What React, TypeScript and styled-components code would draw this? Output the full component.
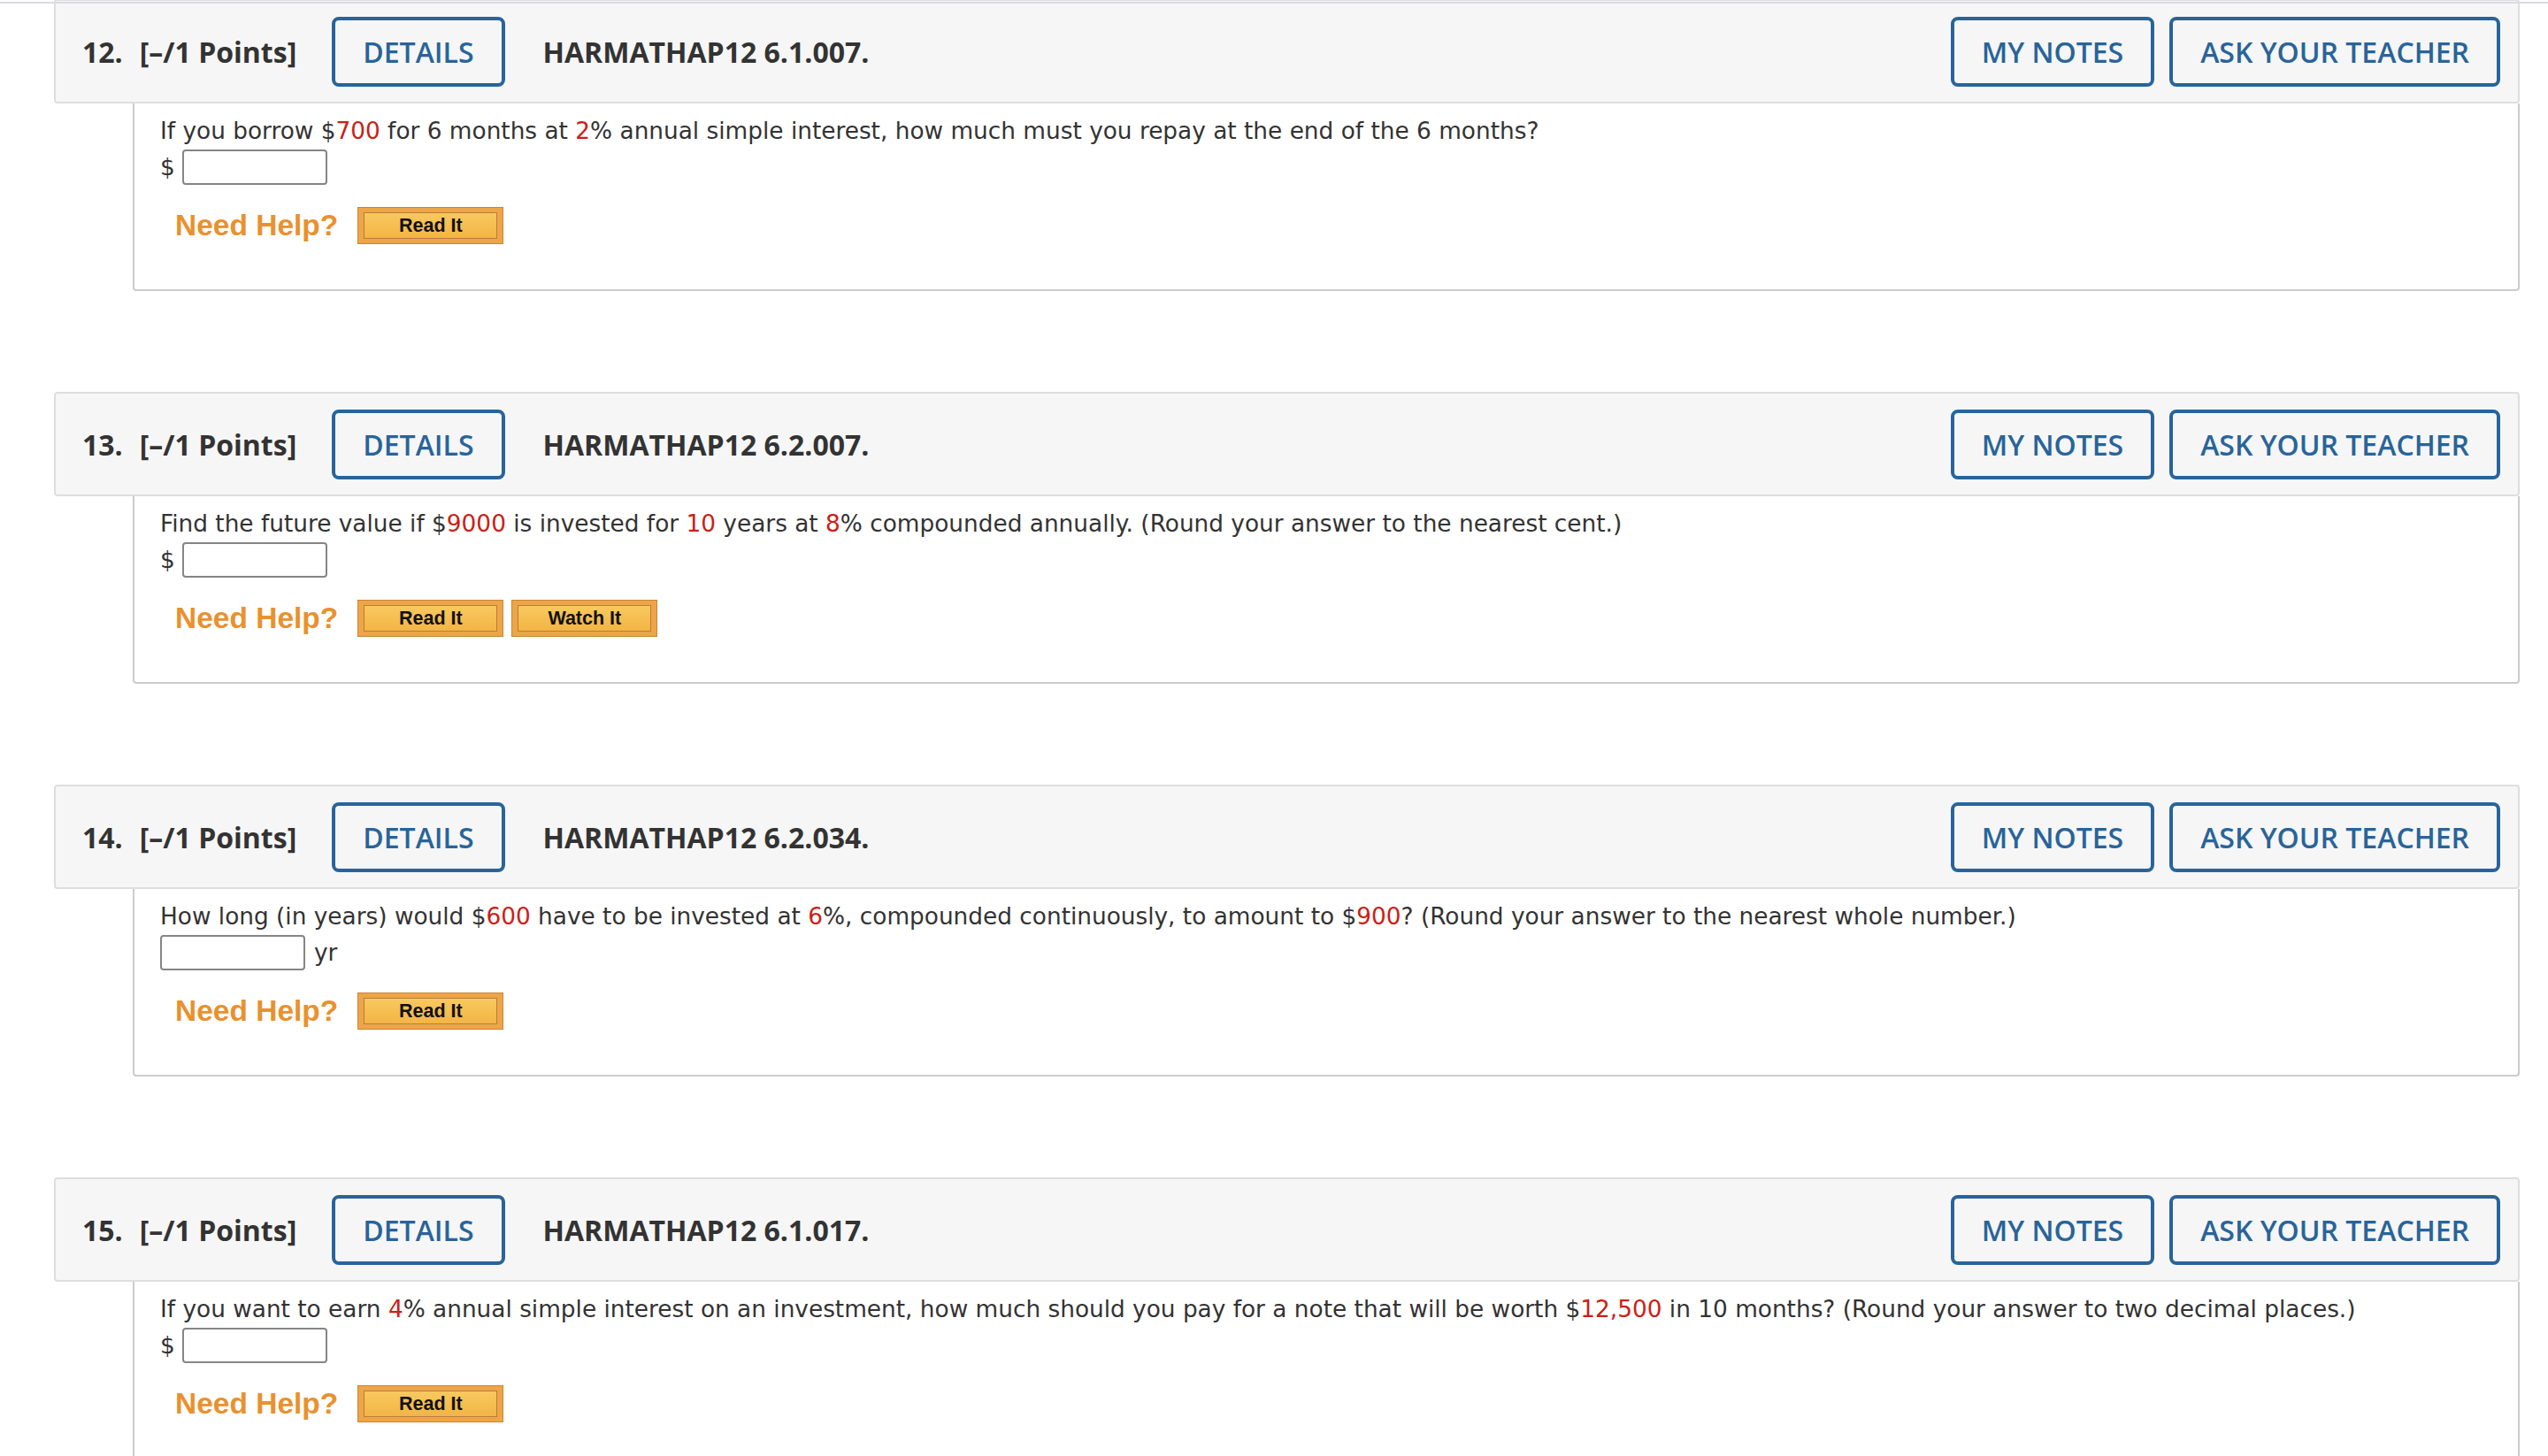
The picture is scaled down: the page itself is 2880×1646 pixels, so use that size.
import React from "react";
import styled, { createGlobalStyle } from "styled-components";

const GlobalStyle = createGlobalStyle`
  html, body {
    margin: 0;
    padding: 0;
    background: #ffffff;
  }
  body {
    font-family: "DejaVu Sans", Verdana, sans-serif;
    color: #333333;
  }
`;

type Part = string | { v: string };

type Question = {
  num: number;
  code: string;
  text: Part[];
  unit?: "before" | "after";
  help: string[];
};

const questions: Question[] = [
  {
    num: 12,
    code: "HARMATHAP12 6.1.007.",
    text: [
      "If you borrow $",
      { v: "700" },
      " for 6 months at ",
      { v: "2" },
      "% annual simple interest, how much must you repay at the end of the 6 months?",
    ],
    unit: "before",
    help: ["Read It"],
  },
  {
    num: 13,
    code: "HARMATHAP12 6.2.007.",
    text: [
      "Find the future value if $",
      { v: "9000" },
      " is invested for ",
      { v: "10" },
      " years at ",
      { v: "8" },
      "% compounded annually. (Round your answer to the nearest cent.)",
    ],
    unit: "before",
    help: ["Read It", "Watch It"],
  },
  {
    num: 14,
    code: "HARMATHAP12 6.2.034.",
    text: [
      "How long (in years) would $",
      { v: "600" },
      " have to be invested at ",
      { v: "6" },
      "%, compounded continuously, to amount to $",
      { v: "900" },
      "? (Round your answer to the nearest whole number.)",
    ],
    unit: "after",
    help: ["Read It"],
  },
  {
    num: 15,
    code: "HARMATHAP12 6.1.017.",
    text: [
      "If you want to earn ",
      { v: "4" },
      "% annual simple interest on an investment, how much should you pay for a note that will be worth $",
      { v: "12,500" },
      " in 10 months? (Round your answer to two decimal places.)",
    ],
    unit: "before",
    help: ["Read It"],
  },
];

const App = () => {
  return (
    <>
      <GlobalStyle />
      <TopRule />
      <Page>
        {questions.map((q) => (
          <Section key={q.num}>
            <Header>
              <Num>{q.num}.</Num>
              <Points>[–/1 Points]</Points>
              <OutlineButton>DETAILS</OutlineButton>
              <Code>{q.code}</Code>
              <Spacer />
              <OutlineButton>MY NOTES</OutlineButton>
              <OutlineButton>ASK YOUR TEACHER</OutlineButton>
            </Header>
            <Body>
              <Prompt>
                {q.text.map((p, i) =>
                  typeof p === "string" ? p : <Red key={i}>{p.v}</Red>
                )}
              </Prompt>
              <AnswerRow>
                {q.unit === "before" && <Unit>$</Unit>}
                <AnswerBox type="text" />
                {q.unit === "after" && <Unit $after>yr</Unit>}
              </AnswerRow>
              <HelpRow>
                <NeedHelp>Need Help?</NeedHelp>
                {q.help.map((h) => (
                  <HelpButton key={h}>
                    <HelpFace>{h}</HelpFace>
                  </HelpButton>
                ))}
              </HelpRow>
            </Body>
          </Section>
        ))}
      </Page>
    </>
  );
};

export default App;

const TopRule = styled.div`
  position: absolute;
  top: 2px;
  left: 0;
  right: 0;
  height: 2px;
  background: #dcdae0;
  z-index: 2;
`;

const Page = styled.div`
  padding: 0 32px 0 61px;
  margin-top: -1px;
`;

const Section = styled.div`
  margin-bottom: 114px;
`;

const Header = styled.div`
  box-sizing: border-box;
  height: 118px;
  display: flex;
  align-items: center;
  padding: 0 20px 0 30px;
  background: #f6f6f6;
  border: 2px solid #dedede;
  border-radius: 4px;
  font-family: "Open Sans", "Liberation Sans", sans-serif;
  color: #333333;
`;

const Num = styled.span`
  font-size: 32px;
  font-weight: 700;
  margin-right: 19px;
`;

const Points = styled.span`
  font-size: 32px;
  font-weight: 700;
  margin-right: 40px;
`;

const Code = styled.span`
  font-size: 32px;
  font-weight: 700;
  margin-left: 43px;
`;

const Spacer = styled.div`
  flex: 1;
`;

const OutlineButton = styled.button`
  box-sizing: border-box;
  height: 79px;
  padding: 0 31px;
  background: transparent;
  border: 4px solid #28649a;
  border-radius: 8px;
  color: #28649a;
  font-family: "Open Sans", "Liberation Sans", sans-serif;
  font-size: 32px;
  font-weight: 600;
  & + & {
    margin-left: 17px;
  }
`;

const Body = styled.div`
  margin-left: 89px;
  padding: 11px 0 51px 29px;
  border: 2px solid #cccccc;
  border-top: none;
  border-radius: 0 0 4px 4px;
  background: #ffffff;
`;

const Prompt = styled.div`
  font-size: 26.35px;
  line-height: 40px;
  color: #333333;
`;

const Red = styled.span`
  color: #cc2015;
`;

const AnswerRow = styled.div`
  display: flex;
  align-items: center;
  margin-top: 1px;
  height: 40px;
`;

const Unit = styled.span<{ $after?: boolean }>`
  font-size: 26.35px;
  color: #333333;
  margin: ${(p) => (p.$after ? "0 0 0 10px" : "0 8px 0 0")};
`;

const AnswerBox = styled.input`
  box-sizing: border-box;
  width: 164px;
  height: 40px;
  border: 2px solid #858585;
  border-radius: 4px;
  background: #ffffff;
  margin: 0;
`;

const HelpRow = styled.div`
  display: flex;
  align-items: center;
  margin: 25px 0 0 17px;
  gap: 9px;
`;

const NeedHelp = styled.span`
  font-family: "Liberation Sans", Arial, sans-serif;
  font-size: 33.5px;
  font-weight: 700;
  color: #e9912e;
  margin-right: 13px;
`;

const HelpButton = styled.div`
  box-sizing: border-box;
  width: 165px;
  height: 42px;
  padding: 5px 6px;
  background: #eea547;
  border: 1px solid #c78638;
`;

const HelpFace = styled.div`
  box-sizing: border-box;
  height: 100%;
  display: flex;
  align-items: center;
  justify-content: center;
  background: linear-gradient(#f8c95f, #f3b445);
  border: 1px solid #b87d3c;
  font-family: "Liberation Sans", Arial, sans-serif;
  font-size: 21.5px;
  font-weight: 700;
  color: #111111;
`;
